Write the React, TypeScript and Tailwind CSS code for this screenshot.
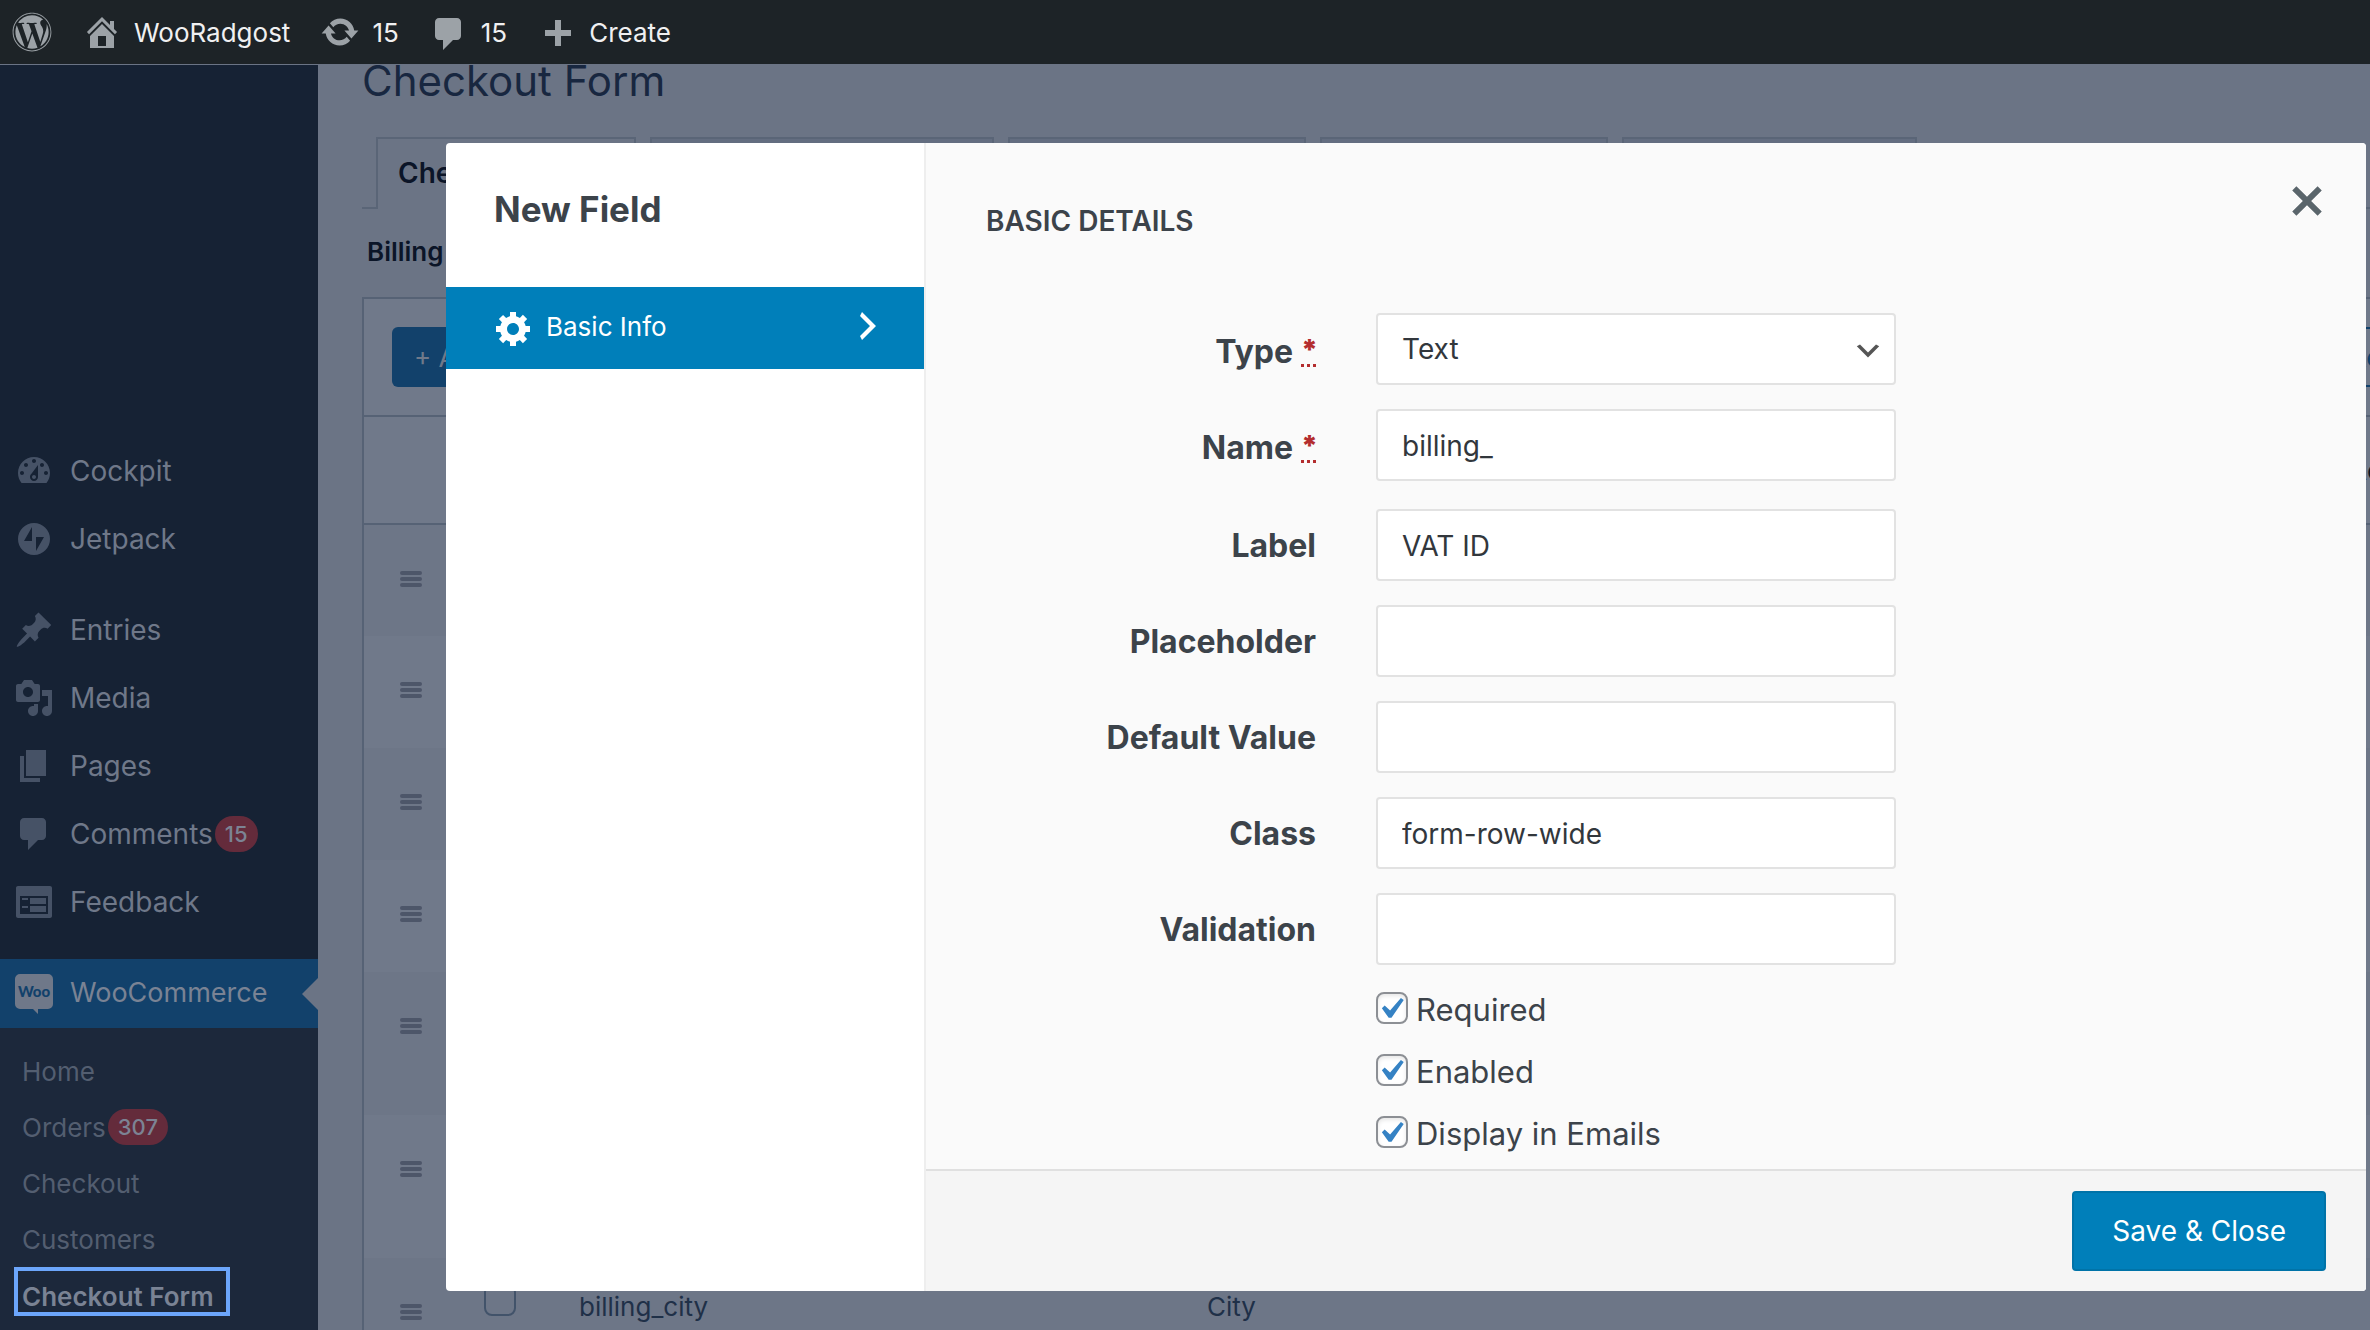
import { useState, type ReactNode } from 'react'
import { FaWordpress } from 'react-icons/fa'

// Dashicons, 20x20 grid
const icons = {
  home: 'M16 8.5l1.53 1.53-1.06 1.06L10 4.6l-6.47 6.49-1.06-1.06L10 2.5l4 4v-2h2v4zm-6-2.46l6 5.99V18H4v-5.97zM12 17v-5H8v5h4z',
  update:
    'M10.2 3.28c3.53 0 6.43 2.61 6.92 6h2.08l-3.5 4-3.5-4h2.32c-.45-1.97-2.21-3.45-4.32-3.45-1.45 0-2.73.71-3.54 1.78L4.95 5.66C6.23 4.2 8.11 3.28 10.2 3.28zm-.4 13.44c-3.52 0-6.43-2.61-6.92-6H.8l3.5-4c1.17 1.33 2.33 2.67 3.5 4H5.48c.45 1.97 2.21 3.45 4.32 3.45 1.45 0 2.73-.71 3.54-1.78l1.71 1.95c-1.28 1.46-3.15 2.38-5.25 2.38z',
  comment: 'M5 2h9c1.1 0 2 .9 2 2v7c0 1.1-.9 2-2 2h-2l-5 5v-5H5c-1.1 0-2-.9-2-2V4c0-1.1.9-2 2-2z',
  plus: 'M17 7v3h-5v5H9v-5H4V7h5V2h3v5h5z',
  dashboard:
    'M3.76 16h12.48c1.1-1.37 1.76-3.11 1.76-5 0-4.42-3.58-8-8-8s-8 3.58-8 8c0 1.89.66 3.63 1.76 5zM10 4c.55 0 1 .45 1 1s-.45 1-1 1-1-.45-1-1 .45-1 1-1zM6 6c.55 0 1 .45 1 1s-.45 1-1 1-1-.45-1-1 .45-1 1-1zm8 0c.55 0 1 .45 1 1s-.45 1-1 1-1-.45-1-1 .45-1 1-1zm-5.37 5.55L12 7v6c0 1.1-.9 2-2 2s-2-.9-2-2c0-.57.24-1.08.63-1.45zM4 10c.55 0 1 .45 1 1s-.45 1-1 1-1-.45-1-1 .45-1 1-1zm12 0c.55 0 1 .45 1 1s-.45 1-1 1-1-.45-1-1 .45-1 1-1zm-5 3c0-.55-.45-1-1-1s-1 .45-1 1 .45 1 1 1 1-.45 1-1z',
  jetpack: 'M10 2a8 8 0 1 0 0 16 8 8 0 0 0 0-16zM9 4v7H5zM11 9h4l-4 7z',
  post: 'M10.44 3.02l1.82-1.82 6.36 6.35-1.83 1.82c-1.05-.68-2.48-.57-3.41.36l-.75.75c-.92.93-1.04 2.35-.35 3.41l-1.83 1.82-2.41-2.41-2.8 2.79c-.42.42-3.38 2.71-3.8 2.29s1.86-3.39 2.28-3.81l2.79-2.79L4.1 9.36l1.83-1.82c1.05.69 2.48.57 3.4-.36l.75-.75c.93-.92 1.05-2.35.36-3.41z',
  media:
    'M13 11V4c0-.55-.45-1-1-1h-1.67L9 1H5L3.67 3H2c-.55 0-1 .45-1 1v7c0 .55.45 1 1 1h10c.55 0 1-.45 1-1zM7 4.5c1.38 0 2.5 1.12 2.5 2.5S8.38 9.5 7 9.5 4.5 8.38 4.5 7 5.62 4.5 7 4.5zM14 6h5v10.5c0 1.38-1.12 2.5-2.5 2.5S14 17.88 14 16.5s1.12-2.5 2.5-2.5c.17 0 .34.02.5.05V9h-3V6zm-4 8.05V13h2v3.5c0 1.38-1.12 2.5-2.5 2.5S7 17.88 7 16.5 8.12 14 9.5 14c.17 0 .34.02.5.05z',
  page: 'M6 15V2h10v13H6zm-1 1h8v2H3V5h2v11z',
  feedback:
    'M2 2h16c.55 0 1 .45 1 1v14c0 .55-.45 1-1 1H2c-.55 0-1-.45-1-1V3c0-.55.45-1 1-1zm15 14V7H3v9h14zM4 8v1h3V8H4zm4 0v3h8V8H8zm-4 4v1h3v-1H4zm4 0v3h8v-3H8z',
  gear: 'M18 12h-2.18c-.17.7-.44 1.35-.81 1.93l1.54 1.54-2.1 2.1-1.54-1.54c-.58.36-1.23.63-1.91.79V19H8v-2.18c-.68-.16-1.33-.43-1.91-.79l-1.54 1.54-2.12-2.12 1.54-1.54c-.36-.58-.63-1.23-.79-1.91H1V9.03h2.17c.16-.7.44-1.35.8-1.94L2.43 5.55l2.1-2.1 1.54 1.54c.58-.37 1.24-.64 1.93-.81V2h3v2.18c.68.16 1.33.43 1.91.79l1.54-1.54 2.12 2.12-1.54 1.54c.36.59.64 1.24.8 1.94H18V12zm-8.5 1.5c1.66 0 3-1.34 3-3s-1.34-3-3-3-3 1.34-3 3 1.34 3 3 3z',
  right: 'M6 15l5-5-5-5 1-2 7 7-7 7z',
  down: 'M5 6l5 5 5-5 2 1-7 7-7-7z',
  close:
    'M11.6 10l4.08 4.08-1.6 1.6L10 11.6l-4.08 4.08-1.6-1.6L8.4 10 4.32 5.92l1.6-1.6L10 8.4l4.08-4.08 1.6 1.6z',
}

type IconName = keyof typeof icons

function Icon({ name, className = 'size-10' }: { name: IconName; className?: string }) {
  return (
    <svg viewBox="0 0 20 20" fill="currentColor" fillRule="evenodd" aria-hidden="true" className={`flex-none ${className}`}>
      <path d={icons[name]} />
    </svg>
  )
}

function WooIcon() {
  return (
    <svg viewBox="0 0 40 42" aria-hidden="true" className="h-[42px] w-10 flex-none">
      <path
        d="M6 1h28a5 5 0 0 1 5 5v25a5 5 0 0 1-5 5H24v5l-5-5H6a5 5 0 0 1-5-5V6a5 5 0 0 1 5-5z"
        fill="#6f7889"
      />
      <text x="20" y="24" textAnchor="middle" fontFamily="Lato" fontSize="15" fontWeight="900" fill="#12416b">
        Woo
      </text>
    </svg>
  )
}

function Count({ children }: { children: ReactNode }) {
  return (
    <span className="ml-[2px] flex h-9 items-center rounded-full bg-[#642b3b] px-[10px] text-[22px] font-medium text-[#7c8394]">
      {children}
    </span>
  )
}

const topMenu: { icon: IconName; label: string }[] = [
  { icon: 'dashboard', label: 'Cockpit' },
  { icon: 'jetpack', label: 'Jetpack' },
]

const contentMenu: { icon: IconName; label: string; count?: number }[] = [
  { icon: 'post', label: 'Entries' },
  { icon: 'media', label: 'Media' },
  { icon: 'page', label: 'Pages' },
  { icon: 'comment', label: 'Comments', count: 15 },
  { icon: 'feedback', label: 'Feedback' },
]

const subMenu: { label: string; count?: number }[] = [
  { label: 'Home' },
  { label: 'Orders', count: 307 },
  { label: 'Checkout' },
  { label: 'Customers' },
]

function MenuItem({ icon, label, count }: { icon: IconName; label: string; count?: number }) {
  return (
    <li>
      <a href="#" className="flex h-[68px] items-center pl-[14px] text-[28px] text-[#6f7889]">
        <Icon name={icon} className="mr-4 size-10 text-[#465266]" />
        {label}
        {count && <Count>{count}</Count>}
      </a>
    </li>
  )
}

function AdminBar() {
  return (
    <header className="relative z-10 flex h-16 flex-none items-center gap-[30px] bg-[#1d2327] pl-3 text-[26px] text-[#f0f0f1]">
      <a href="#" aria-label="WordPress">
        <FaWordpress className="size-10 text-[#9ca2a7]" />
      </a>
      <a href="#" className="flex items-center gap-3">
        <Icon name="home" className="size-10 text-[#9ca2a7]" />
        WooRadgost
      </a>
      <a href="#" className="flex items-center gap-3">
        <Icon name="update" className="size-10 text-[#9ca2a7]" />
        15
      </a>
      <a href="#" className="flex items-center gap-3">
        <Icon name="comment" className="mt-1 size-10 text-[#9ca2a7]" />
        15
      </a>
      <a href="#" className="flex items-center gap-3">
        <Icon name="plus" className="mt-2 size-10 text-[#9ca2a7]" />
        Create
      </a>
    </header>
  )
}

function Sidebar() {
  return (
    <nav className="flex w-[318px] flex-none flex-col border-t border-[#6b7485] bg-[#162234] pt-[372px]">
      <ul>
        {topMenu.map((item) => (
          <MenuItem key={item.label} {...item} />
        ))}
      </ul>
      <ul className="my-[23px]">
        {contentMenu.map((item) => (
          <MenuItem key={item.label} {...item} />
        ))}
      </ul>
      <a href="#" className="relative flex h-[69px] flex-none items-center bg-[#12416b] pl-[14px] text-[27px] text-[#7a8394]">
        <span className="mr-4">
          <WooIcon />
        </span>
        WooCommerce
        <svg viewBox="0 0 16 32" aria-hidden="true" className="absolute right-0 h-8 w-4">
          <path d="M16 0v32L0 16z" fill="#6b7485" />
        </svg>
      </a>
      <ul className="flex-1 bg-[#1c283b] pt-[15px] text-[26px] text-[#535e70]">
        {subMenu.map((item) => (
          <li key={item.label}>
            <a href="#" className="flex h-14 items-center pl-[22px]">
              {item.label}
              {item.count && <Count>{item.count}</Count>}
            </a>
          </li>
        ))}
        <li className="pl-[14px]">
          <a
            href="#"
            className="inline-block border-4 border-[#6ca6fb] pt-[10px] pr-3 pl-1 leading-[31px] font-semibold text-[#7a8394]"
          >
            Checkout Form
          </a>
        </li>
      </ul>
    </nav>
  )
}

const rows = [
  { height: 'h-28' },
  { height: 'h-28' },
  { height: 'h-28' },
  { height: 'h-28' },
  { height: 'h-[143px]' },
  { height: 'h-[143px]' },
  { height: 'h-[143px]', name: 'billing_city', label: 'City' },
]

function DragHandle() {
  return (
    <span className="flex w-[22px] flex-col gap-[2px]">
      <span className="h-1 rounded-xs bg-[#4d5669]" />
      <span className="h-1 rounded-xs bg-[#4d5669]" />
      <span className="h-1 rounded-xs bg-[#4d5669]" />
    </span>
  )
}

function FieldsPage() {
  return (
    <main className="min-w-0 flex-1 overflow-hidden bg-[#6b7485] pl-11 text-[26px] text-[#1f3048]">
      <h1 className="text-[42px] leading-[34px] text-[#182740]">Checkout Form</h1>

      <div className="mt-[39px] flex h-[72px] gap-[14px]">
        <div className="-mr-[14px] w-[14px] border-b-2 border-[#5a6577]" />
        <div className="w-[260px] border-2 border-b-0 border-[#5a6577] pt-[13px] pl-5 text-[28px] font-semibold whitespace-nowrap text-[#0b1528]">
          Checkout Fields
        </div>
        <div className="w-[344px] border-2 border-[#5a6577] bg-[#636d80]" />
        <div className="w-[298px] border-2 border-[#5a6577] bg-[#636d80]" />
        <div className="w-[288px] border-2 border-[#5a6577] bg-[#636d80]" />
        <div className="w-[295px] border-2 border-[#5a6577] bg-[#636d80]" />
        <div className="-ml-[14px] flex-1 border-b-2 border-[#5a6577]" />
      </div>

      <div className="flex h-[88px] items-center pb-1 pl-[5px] font-semibold text-[#0b1528]">Billing Fields</div>

      <div className="border-2 border-r-0 border-[#566275] bg-[#70798a]">
        <div className="flex h-[118px] items-center justify-between border-b-2 border-[#566275] pl-7">
          <button className="h-[60px] rounded-md bg-[#12416b] px-[22px] text-[#70798a]">+ Add field</button>
          <div className="w-11 flex-none">
            <button className="h-[60px] w-max rounded-md border-2 border-[#12416b] px-[22px] text-[#12416b]">
              Reset to default fields
            </button>
          </div>
        </div>
        <table className="w-full table-fixed">
          <colgroup>
            <col className="w-[100px]" />
            <col className="w-[115px]" />
            <col className="w-[628px]" />
            <col />
            <col className="w-[21px]" />
          </colgroup>
          <thead>
            <tr className="h-[107px] border-b-2 border-[#566275]">
              <th />
              <th />
              <th />
              <th />
              <th className="text-left font-normal whitespace-nowrap text-[#0b1528]">Actions</th>
            </tr>
          </thead>
          <tbody>
            {rows.map((row, i) => (
              <tr key={i} className={`${row.height} align-top odd:bg-[#6d7687] even:bg-[#70798a]`}>
                <td className="pt-[46px] pl-9">
                  <DragHandle />
                </td>
                <td className="pt-[26px] pl-5">
                  {row.name && (
                    <input
                      type="checkbox"
                      aria-label={row.name}
                      className="block size-8 appearance-none rounded-lg border-2 border-[#42536a]"
                    />
                  )}
                </td>
                <td className="pt-8 leading-[34px]">{row.name}</td>
                <td className="pt-8 leading-[34px]">{row.label}</td>
                <td />
              </tr>
            ))}
          </tbody>
        </table>
      </div>
    </main>
  )
}

const fields = [
  { id: 'label', label: 'Label', value: 'VAT ID' },
  { id: 'placeholder', label: 'Placeholder', value: '' },
  { id: 'default', label: 'Default Value', value: '' },
  { id: 'class', label: 'Class', value: 'form-row-wide' },
  { id: 'validation', label: 'Validation', value: '' },
]

const toggles = ['Required', 'Enabled', 'Display in Emails']

const control =
  'h-[72px] w-full appearance-none rounded border-2 border-[#e2e2e2] bg-white px-6 text-[28px] text-[#32373c] outline-none'

function FieldRow({ id, label, required, children }: { id: string; label: string; required?: boolean; children: ReactNode }) {
  return (
    <div className="flex items-center gap-[60px]">
      <label
        htmlFor={id}
        className={`flex w-[330px] flex-none justify-end gap-2 text-[32px] leading-10 font-bold ${required ? 'pt-1.5' : 'pt-0.5'}`}
      >
        {label}
        {required && (
          <abbr
            title="required"
            className="h-[35px] w-[15px] border-b-[3px] border-dotted border-[#b32d2e] text-center text-[28px] leading-9 font-black text-[#b32d2e] no-underline"
          >
            *
          </abbr>
        )}
      </label>
      <div className="relative w-[520px]">{children}</div>
    </div>
  )
}

function Toggle({ label }: { label: string }) {
  const [checked, setChecked] = useState(true)
  return (
    <label className="flex h-[62px] items-center gap-2 text-[31px]">
      <span className="relative size-8">
        <input
          type="checkbox"
          checked={checked}
          onChange={() => setChecked(!checked)}
          className="block size-8 appearance-none rounded-lg border-2 border-[#8c8f94] bg-white shadow-[inset_0_2px_4px_rgba(0,0,0,0.1)]"
        />
        {checked && (
          <svg viewBox="3 2 15.2 15.2" aria-hidden="true" className="pointer-events-none absolute inset-0 size-8">
            <path d="M14.83 4.89l1.34.94-5.81 8.38H9.02L5.78 9.67l1.34-1.25 2.57 2.4z" fill="#3582c4" />
          </svg>
        )}
      </span>
      <span className="pt-1">{label}</span>
    </label>
  )
}

function FieldDialog() {
  return (
    <div
      role="dialog"
      aria-label="New Field"
      className="absolute top-[143px] right-1 bottom-[39px] left-[446px] z-20 flex overflow-hidden rounded bg-white text-[#3c434a]"
    >
      <div className="w-[480px] flex-none border-r-2 border-[#eeeeee]">
        <h2 className="flex h-36 items-center pb-3 pl-12 text-[35px] font-bold">New Field</h2>
        <button className="flex h-[82px] w-full items-center bg-[#007fba] pr-9 pl-12 text-[26px] text-white">
          <Icon name="gear" className="mr-3 size-10" />
          <span className="pb-1">Basic Info</span>
          <Icon name="right" className="mb-1 ml-auto size-10" />
        </button>
      </div>

      <div className="flex min-w-0 flex-1 flex-col bg-[#fafafa]">
        <div className="flex-1 pl-[60px]">
          <div className="flex h-[170px] items-start justify-between pt-8 pr-[33px]">
            <h3 className="pt-[26px] text-[28px] leading-10 font-semibold uppercase">Basic Details</h3>
            <button aria-label="Close" className="text-[#5a656b]">
              <Icon name="close" className="size-[52px]" />
            </button>
          </div>
          <form className="flex flex-col">
            <div className="mb-7 flex flex-col gap-6">
              <FieldRow id="type" label="Type" required>
                <select id="type" className={control}>
                  <option>Text</option>
                </select>
                <Icon name="down" className="pointer-events-none absolute top-[22px] right-3 size-8 text-[#555555]" />
              </FieldRow>
              <FieldRow id="name" label="Name" required>
                <input id="name" type="text" defaultValue="billing_" className={`${control} pt-0.5`} />
              </FieldRow>
            </div>
            <div className="flex flex-col gap-6">
              {fields.map((field) => (
                <FieldRow key={field.id} id={field.id} label={field.label}>
                  <input id={field.id} type="text" defaultValue={field.value} className={`${control} pt-0.5`} />
                </FieldRow>
              ))}
            </div>
            <div className="mt-3 pl-[390px]">
              {toggles.map((label) => (
                <Toggle key={label} label={label} />
              ))}
            </div>
          </form>
        </div>
        <div className="flex h-[122px] flex-none items-center justify-end border-t-2 border-[#e0e0e0] bg-[#f5f5f5] pr-10">
          <button className="h-20 rounded border-2 border-[#0073a8] bg-[#007fba] px-[38px] text-[28px] text-white">
            Save &amp; Close
          </button>
        </div>
      </div>
    </div>
  )
}

export default function App() {
  return (
    <div className="relative flex h-screen flex-col overflow-hidden bg-[#6b7485] font-['Inter',sans-serif]">
      <AdminBar />
      <div className="flex min-h-0 flex-1">
        <Sidebar />
        <FieldsPage />
      </div>
      <FieldDialog />
    </div>
  )
}
